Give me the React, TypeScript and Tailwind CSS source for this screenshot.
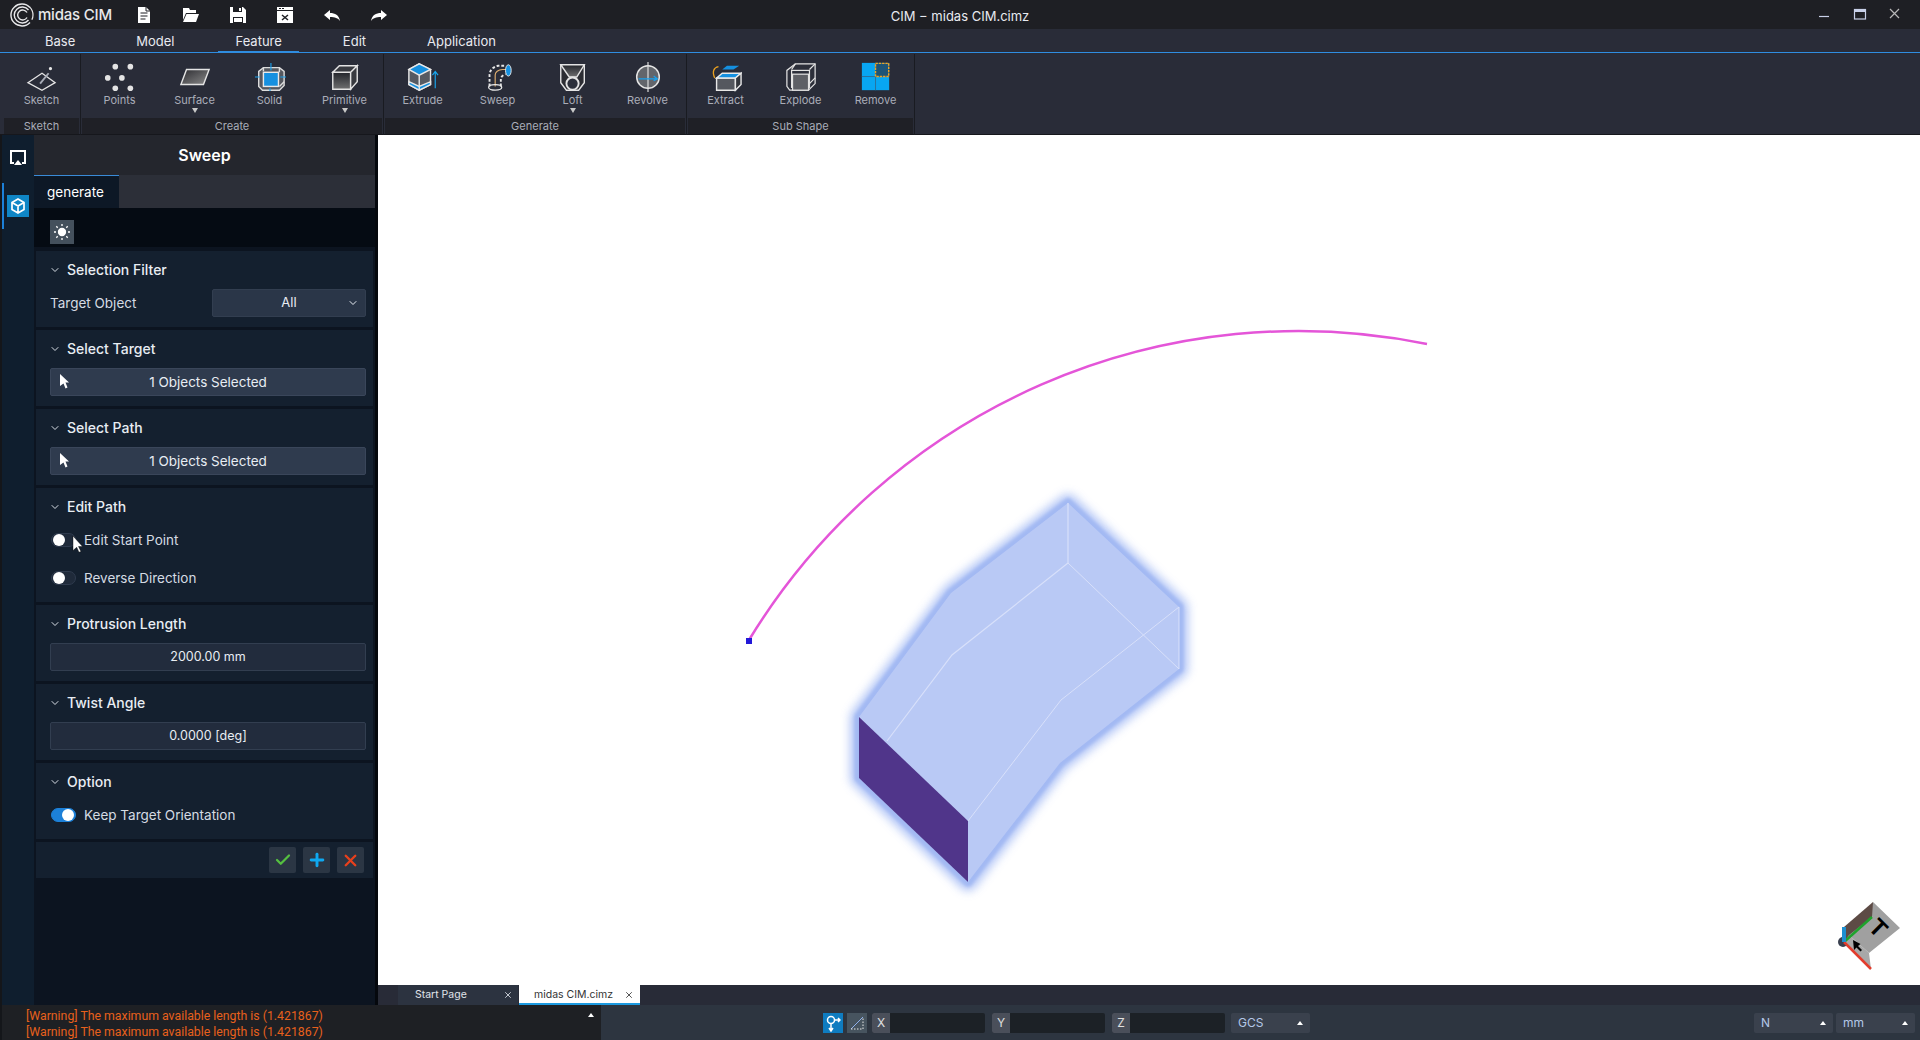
import React from 'react';
import { ChevronDown, Check, Plus, X } from 'lucide-react';

const font = { fontFamily: 'Inter, "Noto Sans", sans-serif' };

const Logo = () => (
  <svg width="24" height="24" viewBox="0 0 24 24" fill="none" stroke="#e8e8ea">
    <path d="M20 4.500A11 11 0 1 0 20 19.500" strokeWidth="1.400" />
    <path d="M18.500 7A8 8 0 1 0 18.500 17" strokeWidth="1.400" />
    <path d="M17 9.500A5 5 0 1 0 17 14.500" strokeWidth="1.400" />
    <circle cx="12" cy="12" r="11" strokeWidth="1.200" strokeDasharray="14 55" strokeDashoffset="-60" />
  </svg>
);

const TitleIcons = () => (
  <div className="flex items-center gap-[31px] ml-[24px]">
    <svg width="16" height="18" viewBox="0 0 16 18"><path d="M2 1h8l4 4v12H2z" fill="#fff" /><path d="M10 1v4h4M4.500 7h7M4.500 10h7M4.500 13h5" stroke="#1e1f24" fill="none" /></svg>
    <svg width="16" height="16" viewBox="0 0 16 16"><path d="M0 1h6l1 2h6v3H3L0 13zM3.500 7H16l-3 8H0z" fill="#fff" /></svg>
    <svg width="16" height="16" viewBox="0 0 16 16"><path d="M0 0h13l3 3v13H0z" fill="#fff" /><path d="M3 0h9v5H3zM3 10h10v6H3z" fill="#1e1f24" /><path d="M9 1h2v3H9zM4 11h8v4H4z" fill="#fff" /></svg>
    <svg width="16" height="16" viewBox="0 0 16 16"><path d="M0 0h16v16H0z" fill="#fff" /><path d="M0 3h16v1H0zM2 1h2v1H2zM5 1h2v1H5z" fill="#1e1f24" /><path d="M5 8l6 5M11 8l-6 5" stroke="#1e1f24" strokeWidth="1.500" /></svg>
    <svg width="16" height="11" viewBox="0 0 16 11"><path d="M0 5L6 0v3c5 0 9 2 10 8-2-3-5-4-10-4v3z" fill="#fff" /></svg>
    <svg width="16" height="11" viewBox="0 0 16 11"><path d="M16 5L10 0v3C5 3 1 5 0 11c2-3 5-4 10-4v3z" fill="#fff" /></svg>
  </div>
);

const shade = (
  <defs>
    <linearGradient id="g1" x1="0" y1="0" x2="1" y2="1">
      <stop offset="0" stopColor="#2b2b30" />
      <stop offset="1" stopColor="#8a8a8a" />
    </linearGradient>
    <linearGradient id="g2" x1="0" y1="0" x2="0" y2="1">
      <stop offset="0" stopColor="#23252b" />
      <stop offset="1" stopColor="#6f6f70" />
    </linearGradient>
  </defs>
);

const icons: Record<string, React.ReactNode> = {
  Sketch: (
    <g fill="none" stroke="#e6e6e6" strokeWidth="1.500">
      <path d="M1 22L16 12l14 10-14 8z" strokeWidth="1.300" />
      <path d="M14 23l9-11" stroke="#a9adb8" strokeWidth="2" />
      <circle cx="25" cy="7" r="1" fill="#e6e6e6" />
    </g>
  ),
  Points: (
    <g fill="#e4e4e4">
      <circle cx="11" cy="5" r="3" /><circle cx="27" cy="5" r="3" />
      <circle cx="3" cy="17" r="3" /><circle cx="18" cy="17" r="3" />
      <circle cx="11" cy="28" r="3" /><circle cx="27" cy="28" r="3" />
    </g>
  ),
  Surface: <path d="M7 8h24l-6 16H1z" fill="url(#g1)" stroke="#e4e4e4" strokeWidth="1.500" />,
  Solid: (
    <g fill="none" stroke="#dcdcdc" strokeWidth="1.500">
      <path d="M9 6h17l5 4v15l-5 5H8l-4-4V10z" fill="#55585f" />
      <path d="M9 6v4M26 6v5M26 26l5-5" />
      <rect x="9" y="11" width="16" height="15" fill="#1590e0" stroke="#e8e8e8" />
      <path d="M17 1v8M0 16h5M34 16h-7M16 31v-3" stroke="#18a0ee" strokeWidth="1.200" />
    </g>
  ),
  Primitive: (
    <g stroke="#e4e4e4" strokeWidth="1.500">
      <path d="M3 11h19v18H3z" fill="url(#g2)" />
      <path d="M3 11l7-7h19l-7 7zM22 11l7-7v17l-7 8z" fill="#383a40" />
    </g>
  ),
  Extrude: (
    <g stroke="#e8e8e8" strokeWidth="1.500">
      <path d="M12 2l12 6v16l-12 6-11-6V8z" fill="#565a62" />
      <path d="M12 2l12 6-12 6-11-6z" fill="#1590e0" />
      <path d="M1 21l11 5 12-5v3l-12 6-11-6z" fill="#1590e0" />
      <path d="M12 14v16" />
      <path d="M29 28V11M26 14l3-4 3 4" stroke="#18a8f0" strokeWidth="1.200" fill="none" />
    </g>
  ),
  Sweep: (
    <g fill="none">
      <path d="M7 26V14c0-5 4-9 9-10h8" stroke="#e8e8e8" strokeWidth="2" strokeDasharray="3 2" />
      <path d="M19 26V18c0-2 2-4 5-5" stroke="#e8e8e8" strokeWidth="2" strokeDasharray="3 2" />
      <path d="M13 26V14c0-3 3-6 8-6h5" stroke="#e0b070" strokeWidth="1.200" />
      <ellipse cx="13" cy="27" rx="7" ry="3" stroke="#e8e8e8" strokeWidth="1.300" />
      <ellipse cx="27" cy="9" rx="3" ry="6" fill="#1590e0" stroke="#e8e8e8" />
    </g>
  ),
  Loft: (
    <g stroke="#e4e4e4" strokeWidth="1.500">
      <path d="M3 3h25v19l-6 8H9l-6-8z" fill="#2c2d33" />
      <path d="M3 3h25l-8 13h-8z" fill="url(#g2)" />
      <circle cx="15.500" cy="23" r="6.500" fill="#2c2f3a" strokeWidth="2" />
    </g>
  ),
  Revolve: (
    <g stroke="#e4e4e4">
      <circle cx="16" cy="16" r="12" fill="#62656b" strokeWidth="1.600" />
      <path d="M16 0v32" strokeWidth="1.200" />
      <path d="M6 18h20M22 15l4 3-4 2" stroke="#18a0ee" strokeWidth="1.300" fill="none" />
    </g>
  ),
  Extract: (
    <g stroke="#e8e8e8" strokeWidth="1.500">
      <path d="M12 8l5-4h13l-6 4z" fill="#1590e0" stroke="none" />
      <path d="M6 17h20v13H6z" fill="#55585f" />
      <path d="M6 17l6-5h20l-6 5z" fill="#1590e0" />
      <path d="M26 17l6-5v12l-6 6z" fill="#33363c" />
      <path d="M8 5C3 6 1 10 4 17" stroke="#e8a020" strokeWidth="1.400" fill="none" />
    </g>
  ),
  Explode: (
    <g stroke="#e4e4e4" strokeWidth="1.300" fill="none">
      <path d="M10 2h21v21l-7 7H4l-3-4V9z" fill="#2c2f3a" />
      <path d="M10 2l-4 6M31 2l-6 6M31 17l-6 6" />
      <rect x="6" y="9" width="19" height="18" />
      <rect x="7" y="13" width="17" height="17" fill="#5e6066" />
    </g>
  ),
  Remove: (
    <g>
      <rect x="1" y="1" width="29" height="29" fill="#08a6f2" />
      <path d="M15.500 1v29M1 15.500h29" stroke="#2c6f9a" />
      <rect x="15.500" y="1.500" width="14" height="14" fill="#1e5476" stroke="#f2a320" strokeWidth="1.500" strokeDasharray="2.500 1" />
    </g>
  ),
};

const RibbonItem = ({ name, more }: { name: string; more?: boolean }) => (
  <div className="w-[75px] h-[58px] flex flex-col items-center">
    <svg width="32" height="32" viewBox="-1 0 34 32" className="mt-[1px] shrink-0">
      {shade}
      {icons[name]}
    </svg>
    <span className="text-[11px] leading-[14px] text-[#a9adb8]">{name}</span>
    {more && <span className="w-0 h-0 mt-[1px] border-x-[3px] border-x-transparent border-t-[5px] border-t-[#c8c8c8]" />}
  </div>
);

const RibbonGroup = ({ label, items }: { label: string; items: { name: string; more?: boolean }[] }) => (
  <div className="flex flex-col border-r border-[#191b21] mr-[1px] pr-[1px] h-[81px]">
    <div className="flex pt-[6px] h-[64px]">
      {items.map(i => <RibbonItem key={i.name} {...i} />)}
    </div>
    <div className="h-[16px] bg-[#1f2026] text-center text-[11px] leading-[16px] text-[#a9adb8]">{label}</div>
  </div>
);

const Ribbon = () => (
  <div className="h-[82px] bg-[#292c38] border-b border-[#16171c] flex pl-[4px] pt-[1px] shrink-0">
    <RibbonGroup label="Sketch" items={[{ name: 'Sketch' }]} />
    <RibbonGroup label="Create" items={[{ name: 'Points' }, { name: 'Surface', more: true }, { name: 'Solid' }, { name: 'Primitive', more: true }]} />
    <RibbonGroup label="Generate" items={[{ name: 'Extrude' }, { name: 'Sweep' }, { name: 'Loft', more: true }, { name: 'Revolve' }]} />
    <RibbonGroup label="Sub Shape" items={[{ name: 'Extract' }, { name: 'Explode' }, { name: 'Remove' }]} />
  </div>
);

const Section = ({ title, h, children }: { title: string; h: string; children: React.ReactNode }) => (
  <div className={`mx-[2px] mb-[3px] bg-[#14202f] ${h}`}>
    <div className="h-[37px] mb-[1px] flex items-center pl-[13px]">
      <ChevronDown size={12} strokeWidth={2} className="text-[#d8dee6]" />
      <span className="ml-[6px] text-[14px] font-medium text-[#e8edf3]">{title}</span>
    </div>
    {children}
  </div>
);

const FieldBox = ({ light, children }: { light?: boolean; children: React.ReactNode }) => (
  <div className={`relative ml-[14px] mr-[7px] h-[28px] border rounded-[2px] flex items-center justify-center text-[#e8edf3] ${light ? 'text-[13.5px] bg-[#2f3b4e] border-[#3a465a]' : 'text-[12.5px] bg-[#222c3d] border-[#323e50]'}`}>
    {children}
  </div>
);

const Arrow = () => (
  <svg width="10" height="15" viewBox="0 0 10 15" className="absolute left-[9px] top-[5px]">
    <path d="M0 0l9 8.500H5.500l2 5-2 1-2-5L0 12z" fill="#fff" />
  </svg>
);

const Toggle = ({ on, label }: { on?: boolean; label: string }) => (
  <div className="h-[38px] flex items-center pl-[15px]">
    <div className={`w-[25px] h-[14px] rounded-full border flex items-center ${on ? 'bg-[#1c80d8] border-[#1c80d8] justify-end pr-[1px]' : 'bg-[#1f2a3a] border-[#2f3b4e] pl-[1px]'}`}>
      <div className="w-[12px] h-[12px] rounded-full bg-white" />
    </div>
    <span className="ml-[8px] text-[13.5px] text-[#d5dbe3]">{label}</span>
  </div>
);

const Panel = () => (
  <div className="relative w-[341px] bg-[#0c1420] flex flex-col shrink-0">
    <div className="h-[40px] bg-[#24262d] flex items-center justify-center text-[16px] font-semibold text-white">Sweep</div>
    <div className="h-[33px] bg-[#2c2f38] flex">
      <div className="w-[85px] bg-[#0d1826] border-t border-[#3a8bd8] pl-[13px] text-[13.5px] leading-[32px] text-white">generate</div>
    </div>
    <div className="h-[39px] bg-[#050b13] pl-[16px] pt-[12px] mb-[4px]">
      <div className="w-[24px] h-[24px] bg-[#44505c] flex items-center justify-center">
        <svg width="16" height="16" viewBox="0 0 16 16" stroke="#fff" strokeWidth="1.300">
          <circle cx="8" cy="8" r="3.500" fill="#fff" />
          <path d="M8 0v2M8 14v2M0 8h2M14 8h2M2.300 2.300l1.400 1.400M12.300 12.300l1.400 1.400M2.300 13.700l1.400-1.400M12.300 3.700l1.400-1.400" />
        </svg>
      </div>
    </div>

    <Section title="Selection Filter" h="h-[76px]">
      <div className="flex items-center justify-between pl-[14px] pr-[7px]">
        <span className="text-[13.5px] text-[#d5dbe3]">Target Object</span>
        <div className="relative w-[154px] h-[28px] bg-[#2a3648] border border-[#323e50] rounded-[2px] flex items-center justify-center text-[13px] text-[#e8edf3]">
          All
          <ChevronDown size={12} strokeWidth={2} className="absolute right-[6px] top-[7px]" />
        </div>
      </div>
    </Section>
    <Section title="Select Target" h="h-[76px]">
      <FieldBox light><Arrow />1 Objects Selected</FieldBox>
    </Section>
    <Section title="Select Path" h="h-[76px]">
      <FieldBox light><Arrow />1 Objects Selected</FieldBox>
    </Section>
    <Section title="Edit Path" h="h-[114px]">
      <div className="-mt-[5px]">
        <Toggle label="Edit Start Point" />
        <Toggle label="Reverse Direction" />
      </div>
    </Section>
    <Section title="Protrusion Length" h="h-[76px]">
      <FieldBox>2000.00 mm</FieldBox>
    </Section>
    <Section title="Twist Angle" h="h-[76px]">
      <FieldBox>0.0000 [deg]</FieldBox>
    </Section>
    <Section title="Option" h="h-[76px]">
      <div className="-mt-[5px]">
        <Toggle on label="Keep Target Orientation" />
      </div>
    </Section>
    <div className="mx-[2px] h-[36px] bg-[#14202f] flex items-center justify-end gap-[7px] pr-[9px]">
      <div className="w-[27px] h-[26px] rounded-[2px] bg-[#2b3644] flex items-center justify-center"><Check size={18} strokeWidth={3} className="text-[#55c040]" /></div>
      <div className="w-[27px] h-[26px] rounded-[2px] bg-[#2b3644] flex items-center justify-center"><Plus size={20} strokeWidth={3.500} className="text-[#0fa8f0]" /></div>
      <div className="w-[27px] h-[26px] rounded-[2px] bg-[#2b3644] flex items-center justify-center"><X size={19} strokeWidth={3} className="text-[#e8401c]" /></div>
    </div>

    {/* mouse pointer over the Edit Path row */}
    <svg width="12" height="18" viewBox="0 0 12 18" className="absolute left-[38px] top-[400px]">
      <path d="M1 1l9.500 10.500H6.500l2.500 5-2 .8-2.300-5L1 15.500z" fill="#fff" stroke="#000" strokeWidth=".4" />
    </svg>
  </div>
);

const outline = '1068,503 1179,607 1179,669 1060,763 968,882 859,778 859,717 951,593';

const Scene = () => (
  <svg viewBox="378 135 1542 850" className="absolute inset-0 w-full h-full">
    <defs>
      <filter id="glow" x="-20%" y="-20%" width="140%" height="140%">
        <feGaussianBlur stdDeviation="5" />
      </filter>
      <filter id="edge" x="-10%" y="-10%" width="120%" height="120%">
        <feGaussianBlur stdDeviation="1.500" />
      </filter>
    </defs>
    <path d="M749 640A643 643 0 0 1 1427 344" fill="none" stroke="#e455d8" strokeWidth="2.500" />
    <rect x="746" y="638" width="6" height="6" fill="#2218d8" />
    <polygon points={outline} fill="#a0b8f4" stroke="#a0b8f4" strokeWidth="18" strokeLinejoin="round" opacity="0.8" filter="url(#glow)" />
    <polygon points={outline} fill="#a3b9f3" stroke="#a3b9f3" strokeWidth="9" strokeLinejoin="round" filter="url(#edge)" />
    <polygon points={outline} fill="#b9c9f5" />
    <polygon points="859,717 968,821 968,882 859,778" fill="#50358a" />
    <g fill="none" stroke="#d8e0fa" strokeWidth="1">
      <path d="M1068 503V563L952 655L887 741" strokeWidth="1.200" />
      <path d="M1068 563L1179 669V607L1061 700L968 821" />
    </g>
    {/* view cube */}
    <g>
      <circle cx="1843" cy="942" r="5" fill="#3a4050" />
      <polygon points="1844,927 1873,902 1873,916 1844,942" fill="#5d4b45" />
      <polygon points="1873,902 1900,928 1869,953 1849,935 1872,917" fill="#a0a0a0" />
      <polygon points="1849,935 1869,953 1871,969 1844,942" fill="#a8a8a8" />
      <line x1="1844" y1="942" x2="1872" y2="917" stroke="#1fa32c" strokeWidth="2.500" />
      <line x1="1844" y1="942" x2="1871" y2="969" stroke="#e23c2c" strokeWidth="2.500" />
      <rect x="1842" y="927" width="4" height="15" fill="#1d8fd0" />
      <text x="1878" y="936" textAnchor="middle" fontSize="24" fontWeight="700" fill="#000" fontFamily="Liberation Sans, sans-serif" transform="rotate(45 1878 928)">T</text>
      <path d="M1853 940l1 10 2.500-2.500 4 4 1.500-1.500-4-4 2.500-2z" fill="#000" />
    </g>
  </svg>
);

const Coord = ({ label, className }: { label: string; className?: string }) => (
  <div className={`w-[113px] h-[20px] flex bg-[#1c2126] rounded-[2px] overflow-hidden ${className ?? ''}`}>
    <span className="w-[18px] bg-[#4a4f5a] text-center text-[12px] leading-[20px] text-[#e0e0e0]">{label}</span>
  </div>
);

const Drop = ({ label, className }: { label: string; className?: string }) => (
  <div className={`relative w-[79px] h-[20px] bg-[#3a414d] rounded-[2px] pl-[7px] text-[12px] leading-[20px] text-[#b4c8e8] ${className ?? ''}`}>
    {label}
    <span className="absolute right-[7px] top-[8px] w-0 h-0 border-x-[3px] border-x-transparent border-b-[4px] border-b-white" />
  </div>
);

const StatusBar = () => (
  <div className="h-[35px] flex shrink-0">
    <div className="relative w-[601px] bg-[#1e2024] border-l-[2px] border-[#14161a] pl-[24px] pt-[3px] text-[12.3px] leading-[16px] text-[#e8601c]" style={{ fontFamily: 'Roboto, sans-serif' }}>
      <div>[Warning] The maximum available length is (1.421867)</div>
      <div>[Warning] The maximum available length is (1.421867)</div>
      <span className="absolute left-[586px] top-[8px] w-0 h-0 border-x-[3px] border-x-transparent border-b-[4px] border-b-white" />
    </div>
    <div className="flex-1 bg-[#2d3540] flex items-start pt-[8px] pl-[222px]">
      <div className="w-[20px] h-[20px] bg-[#0f7cc0] flex items-center justify-center">
        <svg width="16" height="18" viewBox="0 0 16 18" fill="none" stroke="#fff" strokeWidth="1.500">
          <circle cx="6" cy="6" r="3.500" /><path d="M6 10v6M4 14l2 3 2-3M10 6h5M13 4l2 2-2 2" />
        </svg>
      </div>
      <div className="w-[20px] h-[20px] bg-[#47545f] ml-[4px] flex items-center justify-center">
        <svg width="14" height="14" viewBox="0 0 14 14" fill="none" stroke="#8fb0ea"><path d="M1 13L13 1" /><path d="M1 13h12V1" strokeDasharray="1.500 1.500" stroke="#e8e8e8" /></svg>
      </div>
      <Coord label="X" className="ml-[5px]" />
      <Coord label="Y" className="ml-[7px]" />
      <Coord label="Z" className="ml-[7px]" />
      <Drop label="GCS" className="ml-[6px]" />
      <Drop label="N" className="ml-[444px]" />
      <Drop label="mm" className="ml-[3px]" />
    </div>
  </div>
);

const App = () => (
  <div className="w-[1920px] h-[1040px] flex flex-col overflow-hidden bg-[#1e1f24]" style={font}>
    <div className="relative h-[29px] flex items-center pl-[10px] pt-[1px] bg-[#1e1f24] shrink-0">
      <Logo />
      <span className="ml-[4px] text-[15px] font-medium text-[#e8e8ea] tracking-[-0.2px]">midas CIM</span>
      <TitleIcons />
      <span className="absolute left-0 right-0 top-[8px] leading-[16px] text-center text-[13px] text-[#e8eaf0]">CIM − midas CIM.cimz</span>
      <div className="absolute right-0 top-0 h-full">
        <svg width="102" height="29" viewBox="0 0 102 29" stroke="#c8d0e8" fill="none">
          <path d="M1 16.500h10" strokeWidth="1.200" />
          <rect x="36.500" y="9.500" width="11" height="9.500" strokeWidth="1.200" /><path d="M36 11h12" strokeWidth="2" />
          <path d="M72 9l9 9M81 9l-9 9" stroke="#b8b8b8" strokeWidth="1.200" />
        </svg>
      </div>
    </div>
    <div className="h-[24px] bg-[#292c38] border-b border-[#2f8de0] flex pl-[28px] gap-[27px] shrink-0">
      {['Base', 'Model', 'Feature', 'Edit', 'Application'].map(t => (
        <div key={t} className={`px-[17px] text-[13px] leading-[25px] text-[#e8eaf0] ${t === 'Feature' ? 'border-b-2 border-[#2f8de0] h-[24px]' : ''}`}>{t}</div>
      ))}
    </div>
    <Ribbon />
    <div className="flex flex-1 min-h-0 border-l-[2px] border-[#14161a]">
      <div className="w-[32px] bg-[#0f1e2e] shrink-0 flex flex-col pt-[14px]">
        <svg width="18" height="18" viewBox="0 0 18 18" fill="none" stroke="#fff" strokeWidth="2" className="ml-[7px]">
          <path d="M5 14H2V2h14v12h-3" />
          <path d="M9 11l4 5H5z" fill="#fff" stroke="none" />
        </svg>
        <div className="mt-[16px] h-[46px] border-l-[2px] border-[#1c80d8] pl-[3px] pt-[12px]">
          <div className="w-[22px] h-[22px] bg-[#0f86c6] flex items-center justify-center">
            <svg width="16" height="16" viewBox="0 0 16 16" fill="none" stroke="#fff" strokeWidth="1.700">
              <path d="M8 1l6 3.500v7L8 15l-6-3.500v-7zM2 4.500L8 8l6-3.500M8 8v7" />
            </svg>
          </div>
        </div>
      </div>
      <Panel />
      <div className="w-[3px] bg-[#05080d] shrink-0" />
      <div className="flex-1 flex flex-col min-w-0">
        <div className="relative flex-1 bg-white overflow-hidden"><Scene /></div>
        <div className="h-[20px] bg-[#282b37] flex pl-[20px] shrink-0 text-[10.5px] leading-[20px]">
          <div className="relative w-[120px] bg-[#2c3340] pl-[17px] text-[#e0e4ea]">Start Page<X size={10} className="absolute right-[5px] top-[5px]" /></div>
          <div className="relative w-[121px] ml-px bg-white pl-[15px] text-[#333] border-b-2 border-[#1c9ae0]">midas CIM.cimz<X size={10} className="absolute right-[6px] top-[5px]" /></div>
        </div>
      </div>
    </div>
    <StatusBar />
  </div>
);

export default App;
